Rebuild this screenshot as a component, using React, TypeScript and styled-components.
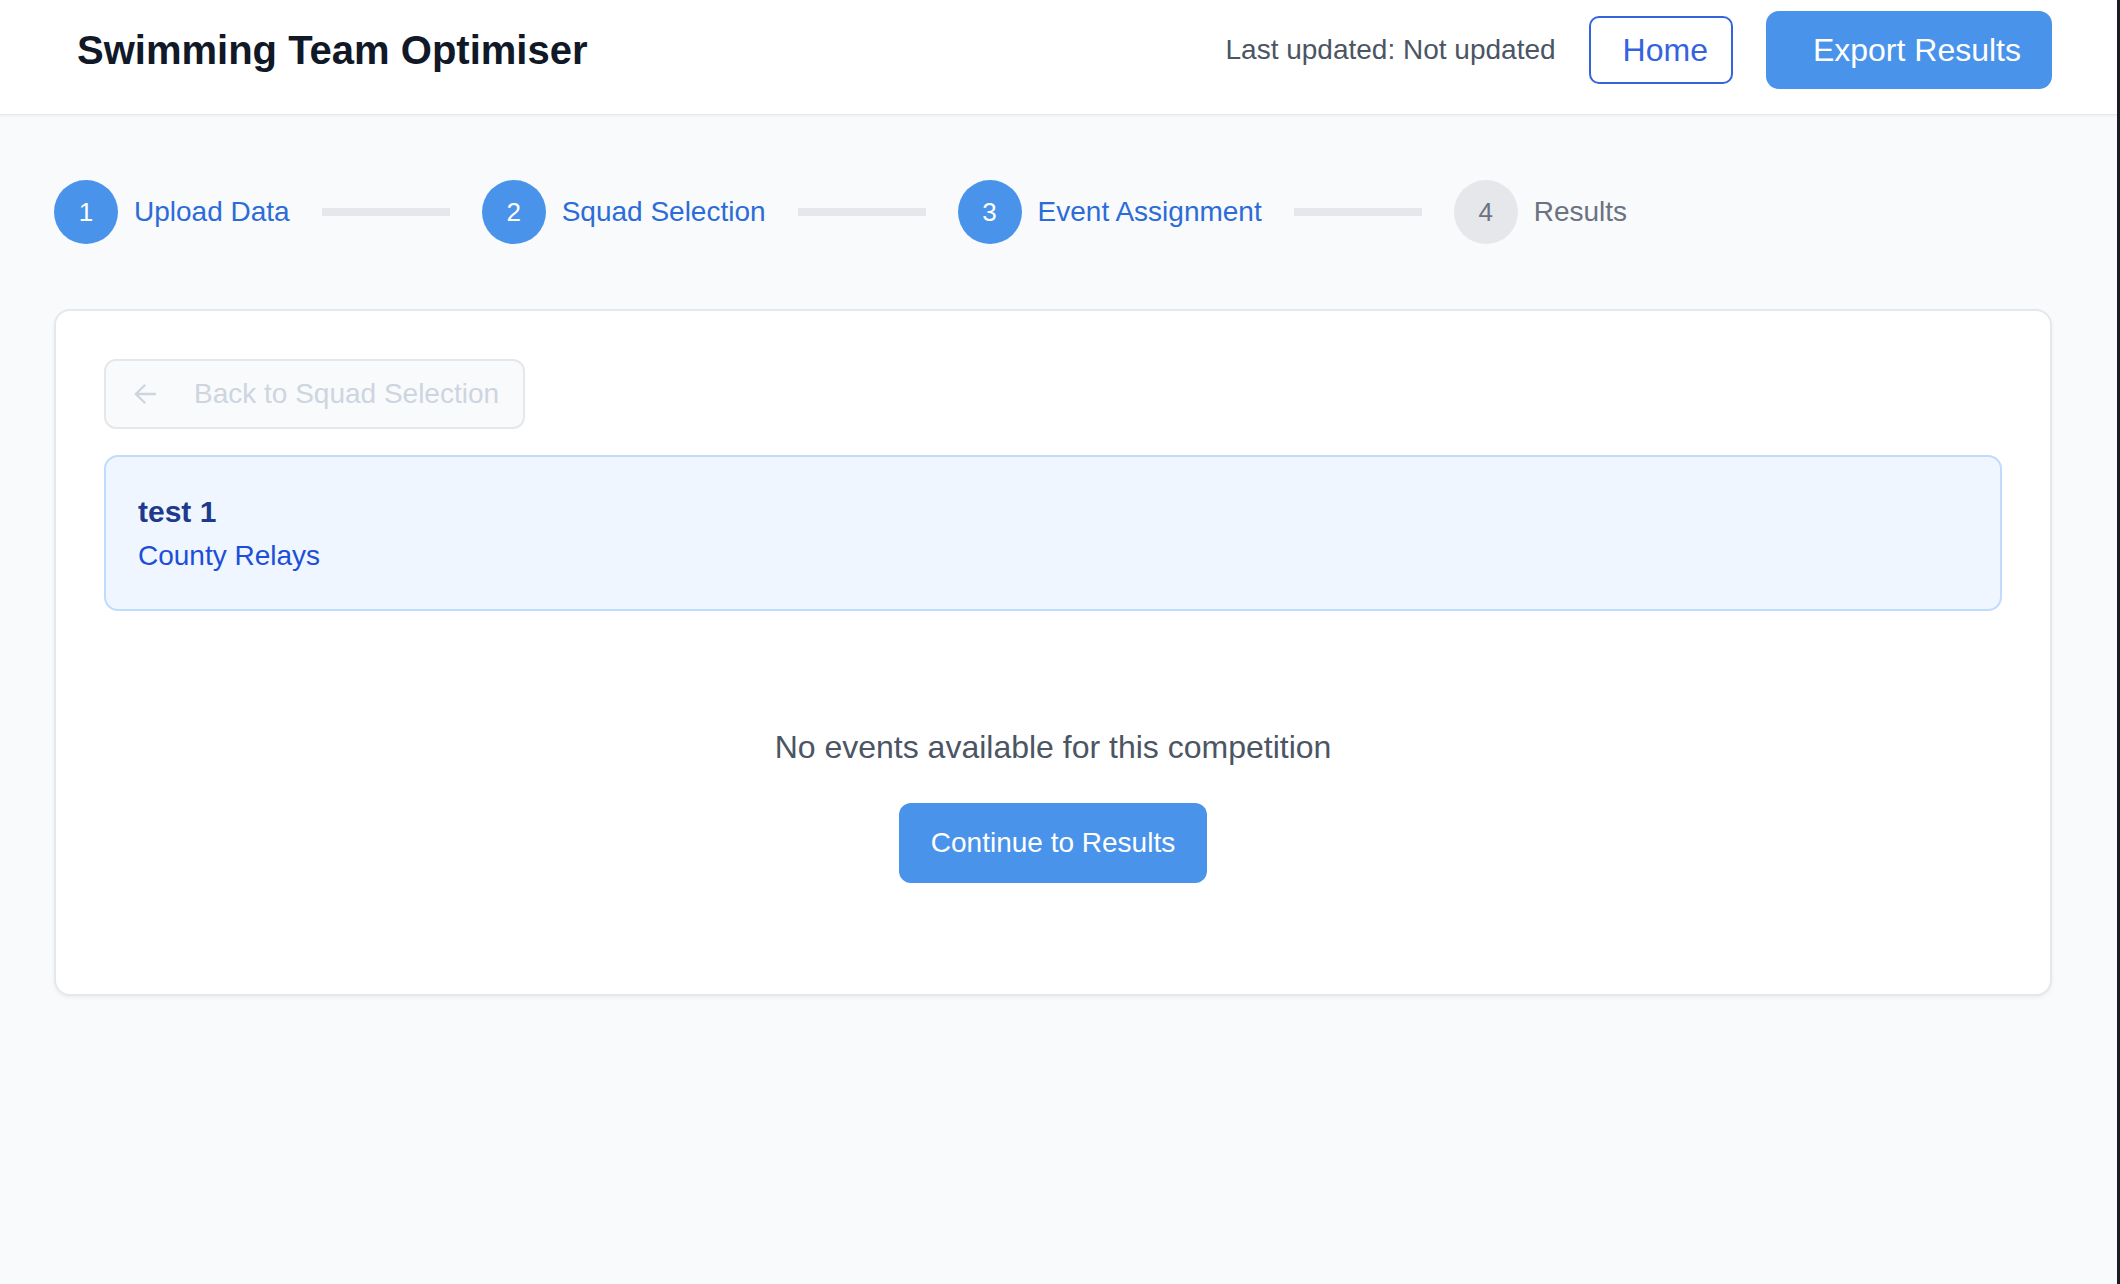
import React from "react";
import styled, { createGlobalStyle } from "styled-components";

const GlobalStyle = createGlobalStyle`
  html, body {
    margin: 0;
    padding: 0;
  }
  body {
    font-family: "Liberation Sans", Arial, Helvetica, sans-serif;
    background: #f9fafb;
  }
  * {
    box-sizing: border-box;
  }
`;

const Frame = styled.div`
  display: flex;
  min-height: 100vh;
`;

const Page = styled.div`
  flex: 1;
  min-width: 0;
  display: flex;
  flex-direction: column;
  background: #f9fafb;
`;

const EdgeStrip = styled.div`
  flex: none;
  width: 3px;
  background: #1c1c22;
`;

const Header = styled.header`
  display: flex;
  align-items: center;
  justify-content: space-between;
  padding: 11px 65px 25px 77px;
  background: #ffffff;
  border-bottom: 1px solid #e5e7eb;
  box-shadow: 0 1px 3px rgba(0, 0, 0, 0.05);
`;

const Title = styled.h1`
  margin: 0;
  font-size: 40px;
  line-height: 1.2;
  font-weight: 700;
  color: #111827;
`;

const HeaderActions = styled.div`
  display: flex;
  align-items: center;
  gap: 33px;
`;

const UpdatedText = styled.span`
  font-size: 28px;
  color: #4b5563;
`;

const HomeButton = styled.button`
  height: 68px;
  padding: 0 23px 0 32px;
  border: 2px solid #3563e0;
  border-radius: 10px;
  background: #ffffff;
  color: #3563e0;
  font-family: inherit;
  font-size: 32px;
  cursor: pointer;
`;

const ExportButton = styled.button`
  height: 78px;
  padding: 0 31px 0 47px;
  border: none;
  border-radius: 13px;
  background: #4a93ea;
  color: #ffffff;
  font-family: inherit;
  font-size: 32px;
  cursor: pointer;
`;

const Stepper = styled.nav`
  display: flex;
  align-items: center;
  padding: 65px 65px 65px 54px;
`;

const Step = styled.div`
  display: flex;
  align-items: center;
  gap: 16px;
`;

const StepCircle = styled.div<{ $active: boolean }>`
  flex: none;
  width: 64px;
  height: 64px;
  border-radius: 50%;
  display: flex;
  align-items: center;
  justify-content: center;
  font-size: 26px;
  background: ${(p) => (p.$active ? "#4a93ea" : "#e5e7eb")};
  color: ${(p) => (p.$active ? "#ffffff" : "#6b7280")};
`;

const StepLabel = styled.span<{ $active: boolean }>`
  font-size: 28px;
  color: ${(p) => (p.$active ? "#2b6cd8" : "#6b7280")};
`;

const Connector = styled.div`
  flex: none;
  width: 128px;
  height: 8px;
  margin: 0 32px;
  background: #e5e7eb;
`;

const Main = styled.main`
  padding: 0 65px 0 54px;
`;

const Card = styled.section`
  display: flex;
  flex-direction: column;
  padding: 48px;
  background: #ffffff;
  border: 2px solid #e5e7eb;
  border-radius: 16px;
  box-shadow: 0 2px 4px rgba(0, 0, 0, 0.05);
`;

const BackButton = styled.button`
  align-self: flex-start;
  display: inline-flex;
  align-items: center;
  gap: 38px;
  height: 70px;
  padding: 0 24px 0 28px;
  border: 2px solid #e5e7eb;
  border-radius: 12px;
  background: #f9fafb;
  color: #cdd5e1;
  font-family: inherit;
  font-size: 28px;
  cursor: not-allowed;
`;

const InfoBox = styled.div`
  margin-top: 26px;
  padding: 32px;
  background: #eff6ff;
  border: 2px solid #bfdbfe;
  border-radius: 14px;
`;

const InfoTitle = styled.h2`
  margin: 0;
  font-size: 30px;
  line-height: 1.5;
  font-weight: 700;
  color: #1e3a8a;
`;

const InfoSubtitle = styled.p`
  margin: 1px 0 0;
  font-size: 28px;
  line-height: 1.5;
  color: #1d4ed8;
`;

const EmptyState = styled.div`
  display: flex;
  flex-direction: column;
  align-items: center;
  margin-top: 48px;
  padding: 64px 0 63px;
`;

const EmptyText = styled.p`
  margin: 0 0 32px;
  font-size: 32px;
  line-height: 1.5;
  color: #4b5563;
`;

const ContinueButton = styled.button`
  height: 80px;
  padding: 0 32px;
  border: none;
  border-radius: 12px;
  background: #4a93ea;
  color: #ffffff;
  font-family: inherit;
  font-size: 28px;
  cursor: pointer;
`;

const ArrowLeft = () => (
  <svg width="22" height="20" viewBox="0 0 22 20" fill="none" aria-hidden="true">
    <path
      d="M21 10H1.8M10.5 1.5L1.8 10l8.7 8.5"
      stroke="#cdd5e1"
      strokeWidth="2.4"
      strokeLinecap="round"
      strokeLinejoin="round"
    />
  </svg>
);

const steps = [
  { n: 1, label: "Upload Data", active: true },
  { n: 2, label: "Squad Selection", active: true },
  { n: 3, label: "Event Assignment", active: true },
  { n: 4, label: "Results", active: false },
];

export default function App() {
  return (
    <>
      <GlobalStyle />
      <Frame>
        <Page>
          <Header>
            <Title>Swimming Team Optimiser</Title>
            <HeaderActions>
              <UpdatedText>Last updated: Not updated</UpdatedText>
              <HomeButton>Home</HomeButton>
              <ExportButton>Export Results</ExportButton>
            </HeaderActions>
          </Header>
          <Stepper>
            {steps.map((s, i) => (
              <React.Fragment key={s.n}>
                <Step>
                  <StepCircle $active={s.active}>{s.n}</StepCircle>
                  <StepLabel $active={s.active}>{s.label}</StepLabel>
                </Step>
                {i < steps.length - 1 && <Connector />}
              </React.Fragment>
            ))}
          </Stepper>
          <Main>
            <Card>
              <BackButton disabled>
                <ArrowLeft />
                <span>Back to Squad Selection</span>
              </BackButton>
              <InfoBox>
                <InfoTitle>test 1</InfoTitle>
                <InfoSubtitle>County Relays</InfoSubtitle>
              </InfoBox>
              <EmptyState>
                <EmptyText>No events available for this competition</EmptyText>
                <ContinueButton>Continue to Results</ContinueButton>
              </EmptyState>
            </Card>
          </Main>
        </Page>
        <EdgeStrip />
      </Frame>
    </>
  );
}
